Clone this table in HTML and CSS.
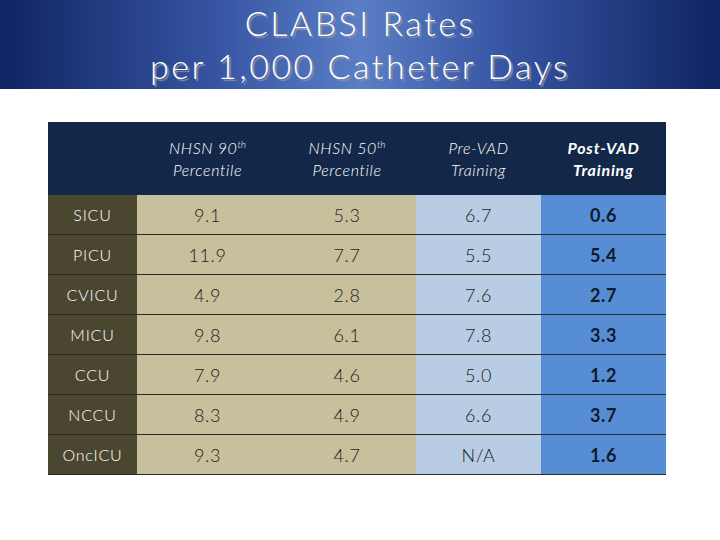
FILE: index.html
```html
<!DOCTYPE html>
<html>
<head>
<meta charset="utf-8">
<link rel="stylesheet" href="styles.css">
</head>
<body>
<div class="banner">
  <h1 class="title">CLABSI Rates<br>per 1,000 Catheter Days</h1>
</div>
<div class="wrap">
<table class="rates">
  <colgroup>
    <col class="c1"><col class="c2"><col class="c3"><col class="c4"><col class="c5">
  </colgroup>
  <thead>
    <tr>
      <th></th>
      <th>NHSN 90<sup>th</sup><br>Percentile</th>
      <th>NHSN 50<sup>th</sup><br>Percentile</th>
      <th>Pre-VAD<br>Training</th>
      <th class="bold">Post-VAD<br>Training</th>
    </tr>
  </thead>
  <tbody>
    <tr><td class="unit">SICU</td><td class="tan">9.1</td><td class="tan">5.3</td><td class="lb">6.7</td><td class="mb">0.6</td></tr>
    <tr><td class="unit">PICU</td><td class="tan">11.9</td><td class="tan">7.7</td><td class="lb">5.5</td><td class="mb">5.4</td></tr>
    <tr><td class="unit">CVICU</td><td class="tan">4.9</td><td class="tan">2.8</td><td class="lb">7.6</td><td class="mb">2.7</td></tr>
    <tr><td class="unit">MICU</td><td class="tan">9.8</td><td class="tan">6.1</td><td class="lb">7.8</td><td class="mb">3.3</td></tr>
    <tr><td class="unit">CCU</td><td class="tan">7.9</td><td class="tan">4.6</td><td class="lb">5.0</td><td class="mb">1.2</td></tr>
    <tr><td class="unit">NCCU</td><td class="tan">8.3</td><td class="tan">4.9</td><td class="lb">6.6</td><td class="mb">3.7</td></tr>
    <tr><td class="unit">OncICU</td><td class="tan">9.3</td><td class="tan">4.7</td><td class="lb">N/A</td><td class="mb">1.6</td></tr>
  </tbody>
</table>
</div>
</body>
</html>
```
FILE: styles.css
```css
html, body {
  margin: 0;
  padding: 0;
  background: #ffffff;
}
body {
  width: 720px;
  height: 540px;
  overflow: hidden;
  font-family: "Lato", "DejaVu Sans", sans-serif;
}
.banner {
  height: 89px;
  background: linear-gradient(to right, #0f2462 0%, #3755a3 30%, #5a7ec6 50%, #3755a3 70%, #0f2462 100%);
  display: flex;
  justify-content: center;
  align-items: center;
}
.title {
  margin: 0;
  color: #ffffff;
  font-weight: 300;
  font-size: 34px;
  line-height: 43px;
  text-align: center;
  letter-spacing: 2.5px;
  text-shadow: 2px 2px 1px #8a8fa0;
  padding-bottom: 2px;
}
.wrap {
  padding: 33px 0 0 48px;
}
.rates {
  border-collapse: collapse;
  table-layout: fixed;
  width: 618px;
}
.c1 { width: 89px; }
.c2 { width: 141px; }
.c3 { width: 138px; }
.c4 { width: 125px; }
.c5 { width: 125px; }
.rates th {
  background: #132848;
  color: #ffffff;
  font-style: italic;
  font-weight: 300;
  font-size: 16px;
  line-height: 22px;
  letter-spacing: 0.6px;
  height: 73px;
  padding: 0;
  text-align: center;
  vertical-align: middle;
}
.rates th sup {
  font-size: 10px;
  line-height: 0;
  vertical-align: 6px;
  letter-spacing: 0;
}
.rates th.bold {
  font-weight: 700;
  letter-spacing: 0.8px;
}
.rates td {
  height: 39px;
  padding: 0;
  text-align: center;
  vertical-align: middle;
  font-size: 18px;
  font-weight: 300;
  letter-spacing: 0.6px;
  color: #1a1a1a;
  border-bottom: 1px solid #2a2a26;
}
.rates td.unit {
  background: #4b462f;
  color: #ffffff;
  font-size: 16px;
  letter-spacing: 0.8px;
}
.rates td.tan { background: #c8c09d; }
.rates td.lb { background: #b8cce4; }
.rates td.mb {
  background: #568dd4;
  font-weight: 700;
  color: #111a2a;
}
```
